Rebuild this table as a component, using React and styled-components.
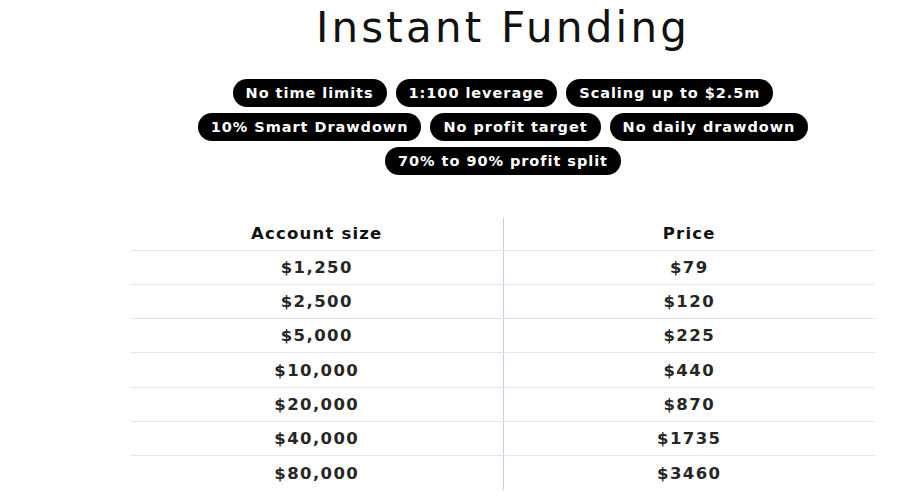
import React from "react";
import styled, { createGlobalStyle } from "styled-components";

const Global = createGlobalStyle`
  html, body { margin: 0; padding: 0; background: #ffffff; }
  body { font-family: "DejaVu Sans", "Liberation Sans", sans-serif; color: #111; }
`;

const Main = styled.main`
  width: 744px;
  margin-left: 131px;
  display: flex;
  flex-direction: column;
  align-items: center;
`;

const Title = styled.h1`
  margin: 4px 0 0;
  font-family: "DejaVu Sans", sans-serif;
  font-weight: 400;
  font-size: 42px;
  line-height: 48px;
  letter-spacing: 3.2px;
  color: #111;
`;

const Pills = styled.div`
  margin-top: 27px;
  display: flex;
  flex-direction: column;
  align-items: center;
  gap: 6px;
`;

const PillRow = styled.div`
  display: flex;
  gap: 9px;
  justify-content: center;
`;

const Pill = styled.span`
  display: inline-flex;
  align-items: center;
  height: 28px;
  padding: 0 13px;
  border-radius: 14px;
  background: #000;
  color: #fff;
  font-family: "DejaVu Sans", sans-serif;
  font-weight: 700;
  font-size: 14.5px;
  letter-spacing: 0.95px;
  white-space: nowrap;
`;

const Table = styled.table`
  margin-top: 43px;
  width: 100%;
  border-collapse: collapse;
  table-layout: fixed;
`;

const Cell = styled.td`
  height: ${(p) => (p.$head ? "32px" : "34.3px")};
  padding: 0;
  text-align: center;
  vertical-align: middle;
  font-family: "DejaVu Sans", sans-serif;
  font-weight: 700;
  font-size: 16.5px;
  letter-spacing: ${(p) => (p.$head ? "1.2px" : "1.4px")};
  color: ${(p) => (p.$head ? "#111" : "#262626")};
  border-bottom: ${(p) => (p.$last ? "none" : "1px solid #e3e3f3")};
  border-left: ${(p) => (p.$right ? "1px solid #cacaf0" : "none")};
  box-sizing: border-box;
`;

const rows = [
  ["$1,250", "$79"],
  ["$2,500", "$120"],
  ["$5,000", "$225"],
  ["$10,000", "$440"],
  ["$20,000", "$870"],
  ["$40,000", "$1735"],
  ["$80,000", "$3460"],
];

const pillRows = [
  ["No time limits", "1:100 leverage", "Scaling up to $2.5m"],
  ["10% Smart Drawdown", "No profit target", "No daily drawdown"],
  ["70% to 90% profit split"],
];

export default function App() {
  return (
    <>
      <Global />
      <Main>
        <Title>Instant Funding</Title>
        <Pills>
          {pillRows.map((r, i) => (
            <PillRow key={i}>
              {r.map((t) => (
                <Pill key={t}>{t}</Pill>
              ))}
            </PillRow>
          ))}
        </Pills>
        <Table>
          <thead>
            <tr>
              <Cell as="th" $head>Account size</Cell>
              <Cell as="th" $head $right>Price</Cell>
            </tr>
          </thead>
          <tbody>
            {rows.map(([a, p], i) => (
              <tr key={a}>
                <Cell $last={i === rows.length - 1}>{a}</Cell>
                <Cell $right $last={i === rows.length - 1}>{p}</Cell>
              </tr>
            ))}
          </tbody>
        </Table>
      </Main>
    </>
  );
}
